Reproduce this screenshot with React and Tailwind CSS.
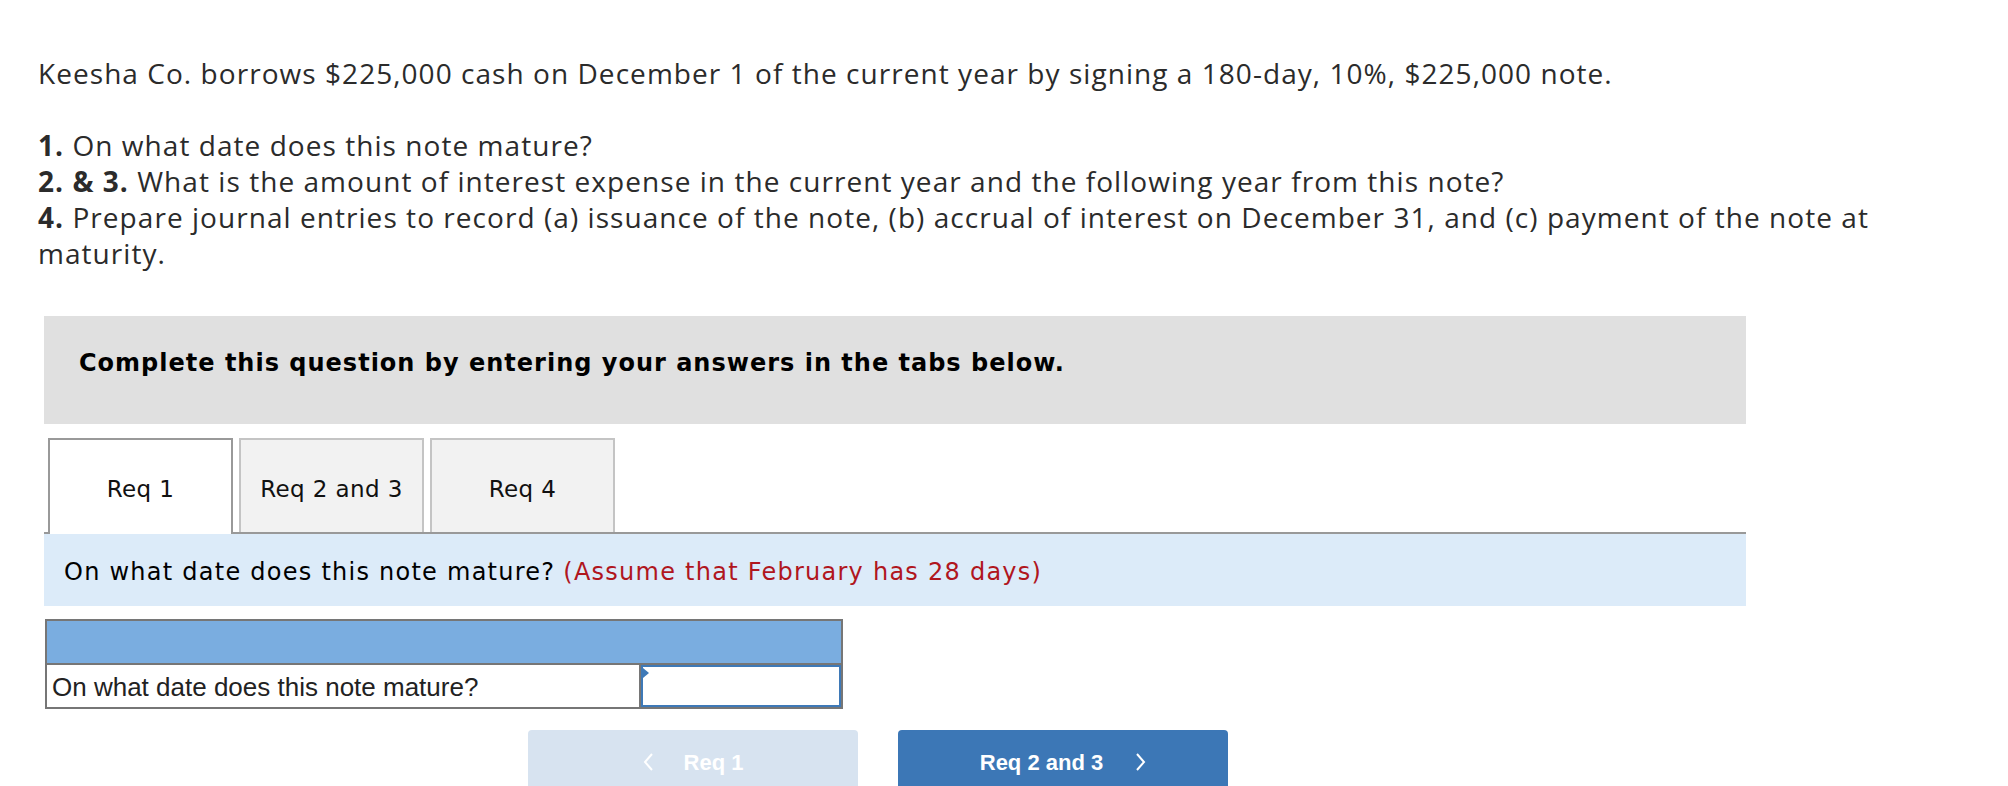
import React from "react";

const Chevron = ({ dir }) => (
  <svg width="11" height="18" viewBox="0 0 11 18" fill="none" stroke="white" strokeWidth="2">
    {dir === "left" ? <polyline points="9,1 2,9 9,17" /> : <polyline points="2,1 9,9 2,17" />}
  </svg>
);

const tabs = ["Req 1", "Req 2 and 3", "Req 4"];

export default function App() {
  return (
    <div className="h-[786px] overflow-hidden bg-white">
      {/* Question text */}
      <div className="w-[1900px] pl-[38px] pt-[55px] font-['Open_Sans',sans-serif] text-[28px] leading-[36px] tracking-[1.05px] text-[#2b2b2b]">
        <p>
          Keesha Co. borrows $225,000 cash on December 1 of the current year by signing a 180-day, 10%, $225,000 note.
        </p>
        <div className="mt-[36px]">
          <p>
            <span className="font-bold">1.</span> On what date does this note mature?
          </p>
          <p>
            <span className="font-bold">2. &amp; 3.</span> What is the amount of interest expense in the current year and the following year from this note?
          </p>
          <p>
            <span className="font-bold">4.</span> Prepare journal entries to record (a) issuance of the note, (b) accrual of interest on December 31, and (c) payment of the note at maturity.
          </p>
        </div>
      </div>

      <div className="ml-[44px] mt-[45px] w-[1702px]">
        {/* Instructions */}
        <div className="h-[108px] bg-[#e0e0e0] pl-[35px] pt-[32px] font-['DejaVu_Sans',Verdana,sans-serif] text-[24px] leading-[30px] font-bold tracking-[1px] text-black">
          Complete this question by entering your answers in the tabs below.
        </div>

        {/* Tabs */}
        <div className="mt-[14px] flex items-end gap-[6px] border-b-2 border-[#999] pl-[4px] font-['DejaVu_Sans',Verdana,sans-serif] text-[23px] tracking-[0.4px] text-[#111]">
          {tabs.map((t, i) =>
            i === 0 ? (
              <div
                key={t}
                className="-mb-[2px] flex h-[96px] w-[185px] items-center justify-center border-2 border-b-0 border-[#999] bg-white pt-[4px]"
              >
                {t}
              </div>
            ) : (
              <div
                key={t}
                className="flex h-[94px] w-[185px] items-center justify-center border-2 border-b-0 border-[#c4c4c4] bg-[#f2f2f2] pt-[6px]"
              >
                {t}
              </div>
            )
          )}
        </div>

        {/* Prompt */}
        <div className="flex h-[72px] items-center bg-[#dcebf9] pl-[20px] pt-[4px] font-['DejaVu_Sans',Verdana,sans-serif] text-[24px] tracking-[1.25px] text-black">
          <span>On what date does this note mature?</span>
          <span className="ml-[8px] text-[#b0161e]">(Assume that February has 28 days)</span>
        </div>

        {/* Answer table */}
        <div className="ml-[1px] mt-[13px] w-[798px] border-2 border-[#767676] font-['Liberation_Sans',Arial,sans-serif] text-[26px] text-[#222]">
          <div className="h-[44px] border-b-2 border-[#767676] bg-[#7aade0]" />
          <div className="flex h-[42px]">
            <div className="flex w-[594px] items-center border-r-2 border-[#767676] pl-[5px] pt-[3px]">
              On what date does this note mature?
            </div>
            <div className="relative flex-1 border-2 border-[#3e79b7] bg-white">
              <span className="absolute left-0 top-[1px] h-0 w-0 border-y-[5px] border-l-[6px] border-y-transparent border-l-[#3e79b7]" />
            </div>
          </div>
        </div>

        {/* Navigation */}
        <div className="mt-[21px] flex gap-[40px] pl-[484px] font-['Liberation_Sans',Arial,sans-serif] text-[22px] font-bold text-white">
          <button className="flex h-[66px] w-[330px] items-center justify-center gap-[30px] rounded-t-[4px] bg-[#d7e3f0] pb-[2px]">
            <Chevron dir="left" />
            <span>Req 1</span>
          </button>
          <button className="flex h-[66px] w-[330px] items-center justify-center gap-[32px] rounded-t-[4px] bg-[#3c77b6] pb-[2px]">
            <span>Req 2 and 3</span>
            <Chevron dir="right" />
          </button>
        </div>
      </div>
    </div>
  );
}
